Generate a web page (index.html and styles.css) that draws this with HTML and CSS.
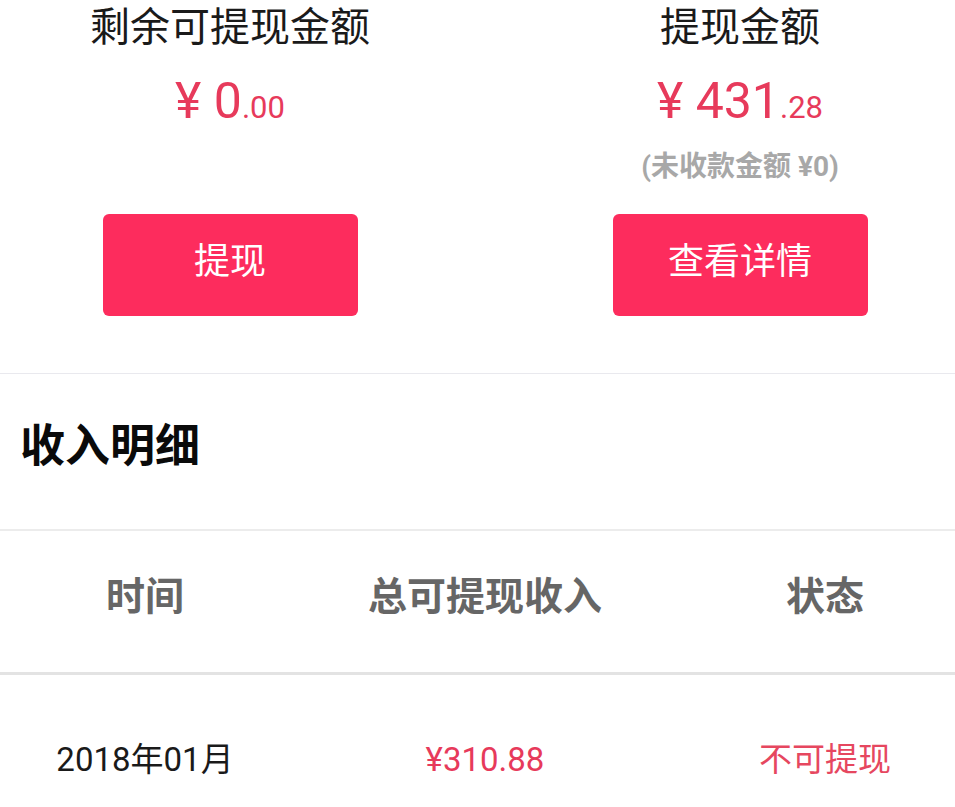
FILE: index.html
```html
<!DOCTYPE html>
<html lang="zh-CN">
<head>
<meta charset="utf-8">
<title>收入明细</title>
<link rel="stylesheet" href="styles.css">
</head>
<body>
<div class="page">
  <section class="summary">
    <div class="card">
      <div class="card-info">
        <div class="card-title">剩余可提现金额</div>
        <div class="amount"><span class="yen">¥</span> <span class="int">0</span><span class="dec">.00</span></div>
      </div>
      <button class="btn">提现</button>
    </div>
    <div class="card">
      <div class="card-info">
        <div class="card-title">提现金额</div>
        <div class="amount"><span class="yen">¥</span> <span class="int">431</span><span class="dec">.28</span></div>
        <div class="note">(未收款金额 ¥0)</div>
      </div>
      <button class="btn">查看详情</button>
    </div>
  </section>

  <section class="section-head">
    <h2 class="section-title">收入明细</h2>
  </section>

  <div class="table-head">
    <div class="th">时间</div>
    <div class="th">总可提现收入</div>
    <div class="th">状态</div>
  </div>

  <div class="table-row">
    <div class="td td-date">2018年01月</div>
    <div class="td td-money">¥310.88</div>
    <div class="td td-status">不可提现</div>
  </div>
</div>
</body>
</html>
```

FILE: styles.css
```css
html, body {
  margin: 0;
  padding: 0;
  background: #ffffff;
  overflow: hidden;
}

body {
  font-family: Roboto, "Noto Sans CJK SC", "Noto Sans", sans-serif;
  color: #1b1b1b;
}

.page {
  width: 1020px;
  margin-left: -25px;
}

/* ---------- summary cards ---------- */
.summary {
  display: grid;
  grid-template-columns: 510px 510px;
  padding-top: 8px;
  padding-bottom: 57px;
  border-bottom: 1px solid #e9e9ee;
}

.card {
  display: flex;
  flex-direction: column;
  align-items: center;
}

.card-info {
  height: 206px;
  display: flex;
  flex-direction: column;
  align-items: center;
}

.card-title {
  font-size: 40px;
  line-height: 40px;
  color: #1a1a1a;
  white-space: nowrap;
}

.amount {
  margin-top: 23px;
  height: 60px;
  font-size: 50px;
  line-height: 60px;
  color: #e73a5b;
  white-space: nowrap;
}

.yen {
  font-size: 50px;
}

.int {
  font-size: 50px;
}

.dec {
  font-size: 31px;
}

.note {
  margin-top: 21px;
  font-size: 28px;
  line-height: 30px;
  font-weight: 700;
  color: #a8a8a8;
  white-space: nowrap;
}

.btn {
  width: 255px;
  height: 102px;
  border: none;
  border-radius: 6px;
  background: #fd2c5d;
  color: #ffffff;
  font-family: Roboto, "Noto Sans CJK SC", sans-serif;
  font-size: 36px;
  line-height: 36px;
  padding: 0 0 6px 0;
  display: flex;
  align-items: center;
  justify-content: center;
}

/* ---------- section head ---------- */
.section-head {
  padding: 50px 45px 60px;
  border-bottom: 2px solid #ececec;
}

.section-title {
  margin: 0;
  font-size: 45px;
  line-height: 45px;
  font-weight: 700;
  color: #0a0a0a;
}

/* ---------- table ---------- */
.table-head,
.table-row {
  display: grid;
  grid-template-columns: 340px 340px 340px;
}

.table-head {
  padding: 47px 0 55px;
  border-bottom: 3px solid #e3e3e3;
}

.th {
  text-align: center;
  font-size: 39px;
  line-height: 39px;
  font-weight: 700;
  color: #666666;
  white-space: nowrap;
}

.table-row {
  padding-top: 65px;
}

.td {
  text-align: center;
  font-size: 33px;
  line-height: 40px;
  white-space: nowrap;
}

.td-date {
  color: #1a1a1a;
}

.td-money {
  color: #e73a5b;
}

.td-status {
  color: #e6475f;
}
```
